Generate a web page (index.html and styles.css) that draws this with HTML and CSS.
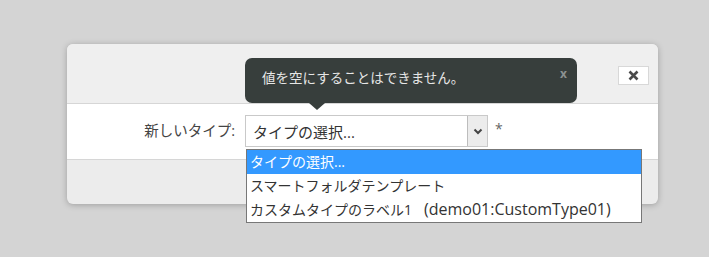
FILE: index.html
```html
<!DOCTYPE html>
<html lang="ja">

<head>
    <meta charset="utf-8">
    <title>新しいタイプ</title>
    <link rel="stylesheet" href="styles.css">
</head>

<body>
    <div class="dialog">
        <div class="dialog_head">
            <button class="close_btn">
                <svg width="11" height="11" viewBox="0 0 11 11">
                    <path d="M1.5 1.5 L9.5 9.5 M9.5 1.5 L1.5 9.5" stroke="#4a4a4a" stroke-width="2.6"/>
                </svg>
            </button>
        </div>
        <div class="dialog_body">
            <label class="field_label">新しいタイプ:</label>
            <div class="select">
                <span class="select_text">タイプの選択...</span>
                <span class="select_arrow">
                    <svg width="10" height="7" viewBox="0 0 10 7">
                        <path d="M1.5 1.5 L5 5 L8.5 1.5" fill="none" stroke="#444" stroke-width="2"/>
                    </svg>
                </span>
            </div>
            <span class="required">*</span>
        </div>
        <div class="dialog_foot"></div>

        <!-- validation tooltip -->
        <div class="tip">
            <span class="tip_text">値を空にすることはできません。</span>
            <span class="tip_close">x</span>
        </div>

        <!-- open select list -->
        <ul class="options">
            <li class="option option_active">タイプの選択...</li>
            <li class="option">スマートフォルダテンプレート</li>
            <li class="option">カスタムタイプのラベル1<span class="option_id">(demo01:CustomType01)</span></li>
        </ul>
    </div>
</body>

</html>
```

FILE: styles.css
```css
* {
    margin: 0;
    padding: 0;
    box-sizing: border-box;
}

body {
    background-color: #d4d4d4;
    font-family: "Open Sans", "Noto Sans CJK JP", sans-serif;
    color: #333;
    padding: 44px 0 0 67px;
    height: 257px;
    overflow: hidden;
}

.dialog {
    position: relative;
    width: 591px;
    height: 160px;
    background-color: #ececec;
    border-radius: 6px;
    box-shadow: 0 1px 6px rgba(0, 0, 0, 0.25);
}

.dialog_head {
    height: 60px;
    background-color: #efefef;
    border-bottom: 1px solid #d6d6d6;
    border-radius: 6px 6px 0 0;
    display: flex;
    justify-content: flex-end;
    padding: 22px 9px 0 0;
}

.close_btn {
    width: 31px;
    height: 19px;
    background-color: white;
    border: 1px solid #d8d8d8;
    display: flex;
    align-items: center;
    justify-content: center;
}

.dialog_body {
    height: 56px;
    background-color: white;
    border-bottom: 1px solid #d6d6d6;
    display: flex;
    align-items: flex-start;
    padding-top: 11px;
}

.field_label {
    width: 168px;
    text-align: right;
    font-size: 14.5px;
    color: #444;
    padding-top: 4px;
}

.select {
    margin-left: 10px;
    width: 243px;
    height: 32px;
    border: 1px solid #c9c9c9;
    display: flex;
    align-items: stretch;
    background-color: white;
}

.select_text {
    flex: 1;
    font-size: 15px;
    color: #333;
    padding: 5px 0 0 7px;
}

.select_arrow {
    width: 20px;
    background-color: #ececec;
    border-left: 1px solid #bdbdbd;
    display: flex;
    align-items: center;
    justify-content: center;
}

.required {
    margin-left: 7px;
    color: #666;
    font-size: 14px;
    padding-top: 4px;
}

.tip {
    position: absolute;
    left: 178px;
    top: 14px;
    width: 332px;
    height: 45px;
    background-color: #373e3c;
    border-radius: 7px;
    color: #e6e6e6;
    font-size: 13.5px;
    padding: 9px 0 0 17px;
}

.tip::after {
    content: '';
    position: absolute;
    left: 64px;
    top: 45px;
    border-left: 8px solid transparent;
    border-right: 8px solid transparent;
    border-top: 7px solid #373e3c;
}

.tip_close {
    position: absolute;
    right: 10px;
    top: 7px;
    font-size: 12px;
    font-weight: bold;
    color: #8b9190;
}

.options {
    position: absolute;
    left: 179px;
    top: 105px;
    width: 396px;
    list-style: none;
    background-color: white;
    border: 1px solid #777;
    padding: 0;
}

.option {
    height: 24px;
    font-size: 14px;
    color: #333;
    padding: 1px 0 0 3px;
    line-height: 21px;
}

.option_id {
    font-size: 16px;
    margin-left: 12px;
}

.option_active {
    background-color: #3399ff;
    color: white;
}
```
